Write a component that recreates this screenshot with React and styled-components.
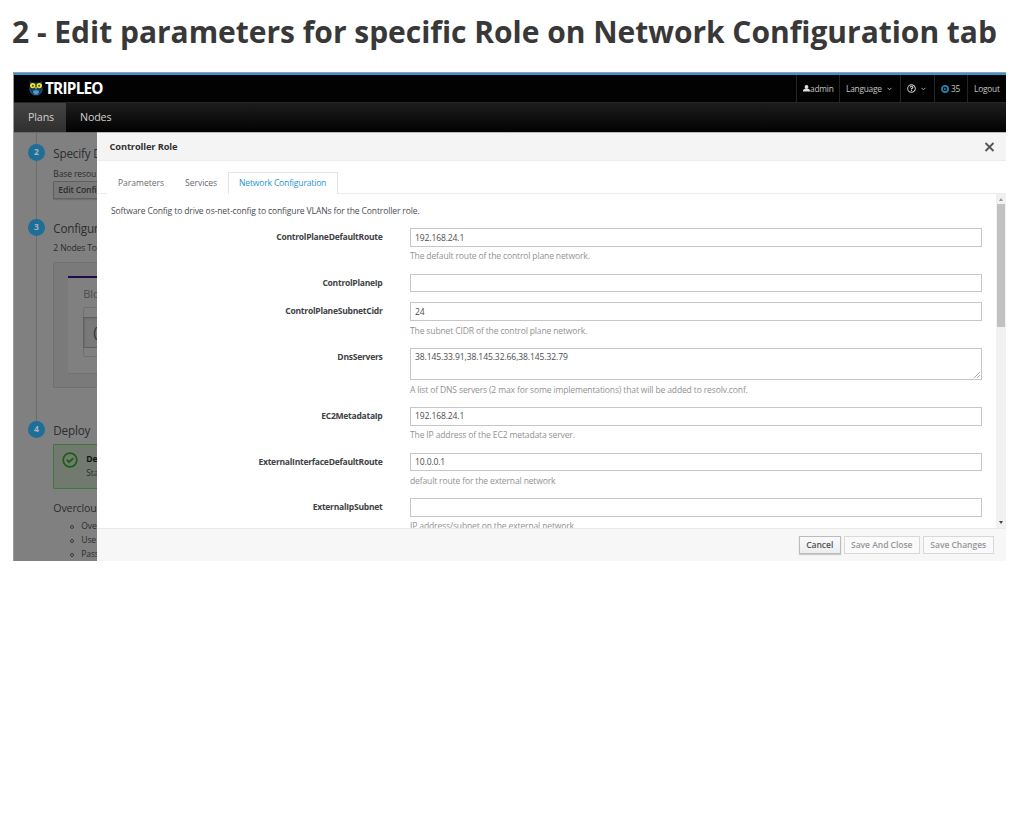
import React from "react";
import styled, { createGlobalStyle } from "styled-components";

const Global = createGlobalStyle`
  * { box-sizing: border-box; }
  body { margin: 0; background: #fff; color: #4a4d50; font: 8.56px/12px "Open Sans", "Noto Sans", sans-serif; letter-spacing: -0.13px; overflow: hidden; }
  button, input, textarea { font: inherit; color: inherit; letter-spacing: inherit; }
`;
const Slide = styled.main`width: 1024px; height: 828px; padding-left: 13px; overflow: hidden;`;
const Title = styled.h1`
  margin: 0 0 0 -1px; height: 72px; padding-top: 12px; white-space: nowrap;
  font: 700 30px/40px "Open Sans", sans-serif; letter-spacing: -0.025px; color: #383838;
`;
const Screen = styled.section`
  width: 993px; height: 489px; display: flex; flex-direction: column; overflow: hidden;
  border-top: 1px solid #a29a94; border-left: 1px solid #9a9a9a;
`;
const TopBar = styled.header`
  height: 29px; flex: none; background: #020202; border-top: 2px solid #2a9bd6;
  display: flex; align-items: stretch; color: #c4c4c4;
`;
const Brand = styled.div`
  display: flex; align-items: center; padding: 0 0 1px 15px; flex: 1; gap: 2px;
  font: 700 15.3px/20px "Open Sans", sans-serif; letter-spacing: -0.75px; color: #fff;
`;
const Utility = styled.div`
  width: ${(p) => p.$w}px; padding: 0 0 0 ${(p) => p.$pad || 6}px; border-left: 1px solid #252525;
  display: flex; align-items: center; white-space: nowrap; gap: ${(p) => p.$gap || 0}px;
  font-size: 8.3px; letter-spacing: -0.2px;
`;
const Nav = styled.nav`
  height: 30px; flex: none; display: flex; border-top: 1px solid #252525; background: linear-gradient(#1d1d1d, #020202);
`;
const NavItem = styled.a`
  padding: 0 14px; width: ${(p) => p.$w}px; font-size: 10.7px; line-height: 29px; color: #d1d1d1;
  background: ${(p) => (p.$active ? "linear-gradient(#434343, #303030)" : "none")};
`;
const Body = styled.div`flex: 1; min-height: 0; display: flex;`;
const Backdrop = styled.aside`
  width: 83px; flex: none; overflow: hidden; background: #808080; color: #2b2d2f; white-space: nowrap;
  border-top: 1px solid #6b6b6b; padding-left: 14px;
`;
const Step = styled.section`
  position: relative; display: flex; gap: 8.3px; height: ${(p) => p.$h}px; width: 300px;
  &::before { content: ""; position: absolute; left: 8px; top: ${(p) => (p.$first ? 0 : 12)}px; height: ${(p) => p.$line}px; width: 1px; background: #6c6c6c; }
`;
const Badge = styled.span`
  position: relative; width: 17px; height: 17px; flex: none; border-radius: 50%; background: #1d6e98; color: #a9b4ba;
  margin-top: ${(p) => p.$top || 0}px; font-weight: 700; text-align: center; line-height: 17px;
`;
const StepBody = styled.div`padding-top: ${(p) => p.$top || 0}px; flex: 1;`;
const StepTitle = styled.h2`margin: 0; font-weight: 400; font-size: 11.7px; line-height: 17px; letter-spacing: -0.2px;`;
const StepText = styled.p`margin: ${(p) => p.$top}px 0 0; line-height: 12px;`;
const EditButton = styled.button`
  margin-top: 1px; display: block; width: 120px; height: 18px; padding: 0 4px; text-align: left; line-height: 15px; font-weight: 600;
  background: #797979; border: 1px solid #606060; border-radius: 1px; box-shadow: 0 1px 1px #6c6c6c;
`;
const NodeArea = styled.div`
  margin-top: 8px; height: 126px; padding: 13px 14px; background: #7a7a7a; border: 1px solid #707070; border-radius: 1px;
`;
const NodeCard = styled.div`
  height: 98px; padding: 8px 15px; background: #808080; border-top: 2px solid #210a4e; border-bottom: 1px solid #717171;
  font-size: 11px; line-height: 15px; color: #4d4d4d;
`;
const Counter = styled.div`
  margin-top: 6px; height: 50px; padding: 9px 0; border: 1px solid #707070; border-radius: 2px;
`;
const Count = styled.div`
  height: 31px; border: 1px solid #606060; margin-left: -1px; background: #797979; padding-left: 9px;
  font-size: 15px; line-height: 26px; color: #303234; box-shadow: inset 1px 1px 2px #6d6d6d;
`;
const Alert = styled.div`
  margin-top: 5px; height: 45px; background: #727a70; border: 1px solid #3c7839; border-radius: 1px;
  display: flex; gap: 8px; padding: 7px 8px; line-height: 14px;
  svg { flex: none; }
  b { display: block; color: #111; }
`;
const Summary = styled.h3`margin: 11px 0 4px; font-weight: 400; font-size: 10.6px; line-height: 16px;`;
const Links = styled.ul`margin: 0; padding: 0 0 0 28px; line-height: 13.8px; list-style: none;`;
const LinkItem = styled.li`
  position: relative;
  &::before { content: ""; position: absolute; left: -11px; top: 5px; width: 4px; height: 4px; box-sizing: border-box; border: 1px solid #3a3a3a; border-radius: 50%; }
`;
const Dialog = styled.section`flex: 1; min-width: 0; background: #fff; display: flex; flex-direction: column; border-top: 1px solid #bbb;`;
const DialogHead = styled.header`
  height: 28px; flex: none; background: #f4f4f4; border-bottom: 1px solid #eeeeee; padding: 0 11px 0 12.5px;
  display: flex; justify-content: space-between; align-items: center; font-size: 9.3px; font-weight: 700; color: #333;
`;
const Tabs = styled.div`height: 33px; flex: none; padding: 11px 0 0 10px; border-bottom: 1px solid #ececec; display: flex;`;
const Tab = styled.a`
  height: 22px; line-height: ${(p) => (p.$active ? 20 : 22)}px; padding: 0 ${(p) => (p.$active ? 10 : 11)}px; white-space: nowrap; width: ${(p) => p.$w}px;
  color: ${(p) => (p.$active ? "#2496d2" : "#686c70")};
  border: ${(p) => (p.$active ? "1px solid #e4e4e4" : "0")}; border-bottom: 0; background: #fff;
  letter-spacing: ${(p) => (p.$active ? "-0.17px" : "-0.03px")};
`;
const Scroller = styled.div`flex: 1; min-height: 0; display: flex;`;
const Form = styled.form`flex: 1; overflow: hidden; padding: 11px 14px 0 14px;`;
const Intro = styled.p`margin: 0 0 11.3px; line-height: 12px;`;
const Row = styled.div`display: grid; grid-template-columns: 271.5px 1fr; column-gap: 27.5px; margin-bottom: 10.1px;`;
const Label = styled.label`text-align: right; font-weight: 700; line-height: 18px; color: #404346; letter-spacing: -0.27px;`;
const Input = styled.input`
  display: block; width: 100%; height: 18.5px; padding: 0 4px; border: 1px solid #c6c6c6; border-radius: 0; background: #fff; outline: none;
`;
const AreaWrap = styled.div`position: relative; svg { position: absolute; right: 2px; bottom: 2px; }`;
const Area = styled.textarea`
  display: block; width: 100%; height: 32px; padding: 2px 4px; border: 1px solid #c6c6c6; line-height: 12px; resize: none; outline: none; overflow: hidden; letter-spacing: -0.1px;
`;
const Help = styled.div`height: 17px; padding-top: 3.6px; line-height: 13px; color: #929292; white-space: nowrap; letter-spacing: -0.15px;`;
const Scrollbar = styled.div`
  width: 10px; flex: none; background: #f1f1f1; display: flex; flex-direction: column; align-items: center; justify-content: space-between; padding: 4px 0;
`;
const Thumb = styled.div`width: 8px; height: 123px; background: #c1c1c1; margin: 3px 0 auto;`;
const Arrow = styled.i`
  border: 2.5px solid transparent;
  ${(p) => (p.$up ? "border-top: 0; border-bottom: 3px solid #999;" : "border-bottom: 0; border-top: 3px solid #444;")}
`;
const Footer = styled.footer`
  height: 33px; flex: none; background: #f7f7f7; border-top: 1px solid #e8e8e8; padding: 7px 12px 0; display: flex; gap: 3px; justify-content: flex-end;
`;
const Button = styled.button`
  width: ${(p) => p.$w}px; height: 18px; padding: 0; line-height: 15px; font-weight: 600; white-space: nowrap; letter-spacing: -0.05px;
  border: 1px solid ${(p) => (p.$primary ? "#bbb" : "#d8d8d8")};
  color: ${(p) => (p.$primary ? "#4d5258" : "#94979a")};
  background: ${(p) => (p.$primary ? "linear-gradient(#fafafa, #ededed)" : "#fafafa")};
  box-shadow: ${(p) => (p.$primary ? "0 1px 1px #ccc" : "none")};
`;

const Owl = () => (
  <svg width="14" height="15" viewBox="0 0 14 15">
    <path d="M.5 0 3 1.5H11L13.5 0 13 5 14 8 12.5 12 9.5 14.5H4.5L1.5 12 0 8 1 5Z" fill="#15395f" />
    <path d="M1 8.5Q1.5 12 5 13.7M13 8.5Q12.5 12 9 13.7" fill="none" stroke="#1e5d94" />
    <path d="M4 9.5 7 8.8 10 9.5 9.5 12 7 13.5 4.5 12Z" fill="#2f7fb9" />
    <path d="M4 11h6M5 13h4" stroke="#9cc8df" strokeWidth=".7" />
    <circle cx="3.7" cy="4.6" r="2.7" fill="#f5e51b" /><circle cx="10.3" cy="4.6" r="2.7" fill="#f5e51b" />
    <circle cx="3.9" cy="4.7" r="1" fill="#48450c" /><circle cx="10.1" cy="4.7" r="1" fill="#48450c" />
    <path d="m6 6 1 3 1-3Z" fill="#e5bc28" />
  </svg>
);
const User = () => (
  <svg width="7" height="7" viewBox="0 0 7 7"><circle cx="3.5" cy="2" r="1.9" fill="#ddd" /><path d="M0 6.6Q0 3.8 2 3.8h3Q7 3.8 7 6.6Z" fill="#ddd" /></svg>
);
const Chevron = () => (
  <svg width="5" height="4" viewBox="0 0 5 4"><path d="m.5.8 2 2 2-2" fill="none" stroke="#aaa" /></svg>
);
const Question = () => (
  <svg width="9" height="9" viewBox="0 0 8 8" fill="none" stroke="#d0d0d0"><circle cx="4" cy="4" r="3.4" strokeWidth=".9" /><path d="M2.8 3.1Q3 2 4 2t1.2 1Q5.2 3.6 4 4.1v.6M4 5.2v1" strokeWidth="1" /></svg>
);
const Running = () => (
  <svg width="8" height="8" viewBox="0 0 8 8"><circle cx="4" cy="4" r="3.1" fill="none" stroke="#2b80ac" strokeWidth="1.8" /><path d="M3.1 2.5 5.6 4 3.1 5.5Z" fill="#2b80ac" /></svg>
);
const Close = () => (
  <svg width="11" height="11" viewBox="0 0 11 11"><path d="m1.5 2 8 8M9.5 2l-8 8" stroke="#555" strokeWidth="1.8" /></svg>
);
const Ok = () => (
  <svg width="16" height="16" viewBox="0 0 16 16" fill="none" stroke="#1c5e15"><circle cx="8" cy="8" r="6.8" strokeWidth="1.7" /><path d="m4.8 7.8 2.3 2.3 4.2-4" strokeWidth="2" /></svg>
);
const Grip = () => (
  <svg width="6" height="6" viewBox="0 0 6 6"><path d="M0 6 6 0M3 6l3-3" stroke="#999" strokeWidth=".8" /></svg>
);

const fields = [
  { name: "ControlPlaneDefaultRoute", value: "192.168.24.1", help: "The default route of the control plane network." },
  { name: "ControlPlaneIp", value: "" },
  { name: "ControlPlaneSubnetCidr", value: "24", help: "The subnet CIDR of the control plane network." },
  { name: "DnsServers", value: "38.145.33.91,38.145.32.66,38.145.32.79", multiline: true, help: "A list of DNS servers (2 max for some implementations) that will be added to resolv.conf." },
  { name: "EC2MetadataIp", value: "192.168.24.1", help: "The IP address of the EC2 metadata server." },
  { name: "ExternalInterfaceDefaultRoute", value: "10.0.0.1", help: "default route for the external network" },
  { name: "ExternalIpSubnet", value: "", help: "IP address/subnet on the external network" },
];

export default function App() {
  return (
    <Slide>
      <Global />
      <Title>2 - Edit parameters for specific Role on Network Configuration tab</Title>
      <Screen>
        <TopBar>
          <Brand><Owl />TRIPLEO</Brand>
          <Utility $w={43}><User />admin</Utility>
          <Utility $w={61} $gap={5}>Language <Chevron /></Utility>
          <Utility $w={34} $gap={5}><Question /><Chevron /></Utility>
          <Utility $w={33} $gap={2}><Running />35</Utility>
          <Utility $w={39}>Logout</Utility>
        </TopBar>
        <Nav><NavItem $w={52} $active>Plans</NavItem><NavItem $w={60}>Nodes</NavItem></Nav>
        <Body>
          <Backdrop>
            <Step $h={75} $line={87} $first>
              <Badge $top={11}>2</Badge>
              <StepBody $top={12}>
                <StepTitle>Specify D</StepTitle>
                <StepText $top={6}>Base resou</StepText>
                <EditButton type="button">Edit Confi</EditButton>
              </StepBody>
            </Step>
            <Step $h={203} $line={202}>
              <Badge $top={11}>3</Badge>
              <StepBody $top={12}>
                <StepTitle>Configur</StepTitle>
                <StepText $top={5}>2 Nodes To</StepText>
                <NodeArea><NodeCard>Blo<Counter><Count>(</Count></Counter></NodeCard></NodeArea>
              </StepBody>
            </Step>
            <Step $h={150} $line={0}>
              <Badge $top={10}>4</Badge>
              <StepBody $top={11}>
                <StepTitle>Deploy</StepTitle>
                <Alert><Ok /><div><b>De</b>Sta</div></Alert>
                <Summary>Overclou</Summary>
                <Links><LinkItem>Ove</LinkItem><LinkItem>Use</LinkItem><LinkItem>Pass</LinkItem></Links>
              </StepBody>
            </Step>
          </Backdrop>
          <Dialog>
            <DialogHead>Controller Role<Close /></DialogHead>
            <Tabs><Tab $w={67}>Parameters</Tab><Tab $w={54}>Services</Tab><Tab $w={110} $active>Network Configuration</Tab></Tabs>
            <Scroller>
              <Form>
                <Intro>Software Config to drive os-net-config to configure VLANs for the Controller role.</Intro>
                {fields.map((f) => (
                  <Row key={f.name}>
                    <Label>{f.name}</Label>
                    <div>
                      {f.multiline ? <AreaWrap><Area defaultValue={f.value} /><Grip /></AreaWrap> : <Input defaultValue={f.value} />}
                      {f.help && <Help>{f.help}</Help>}
                    </div>
                  </Row>
                ))}
              </Form>
              <Scrollbar><Arrow $up /><Thumb /><Arrow /></Scrollbar>
            </Scroller>
            <Footer><Button $w={42.5} $primary>Cancel</Button><Button $w={75.5}>Save And Close</Button><Button $w={71.5}>Save Changes</Button></Footer>
          </Dialog>
        </Body>
      </Screen>
    </Slide>
  );
}
